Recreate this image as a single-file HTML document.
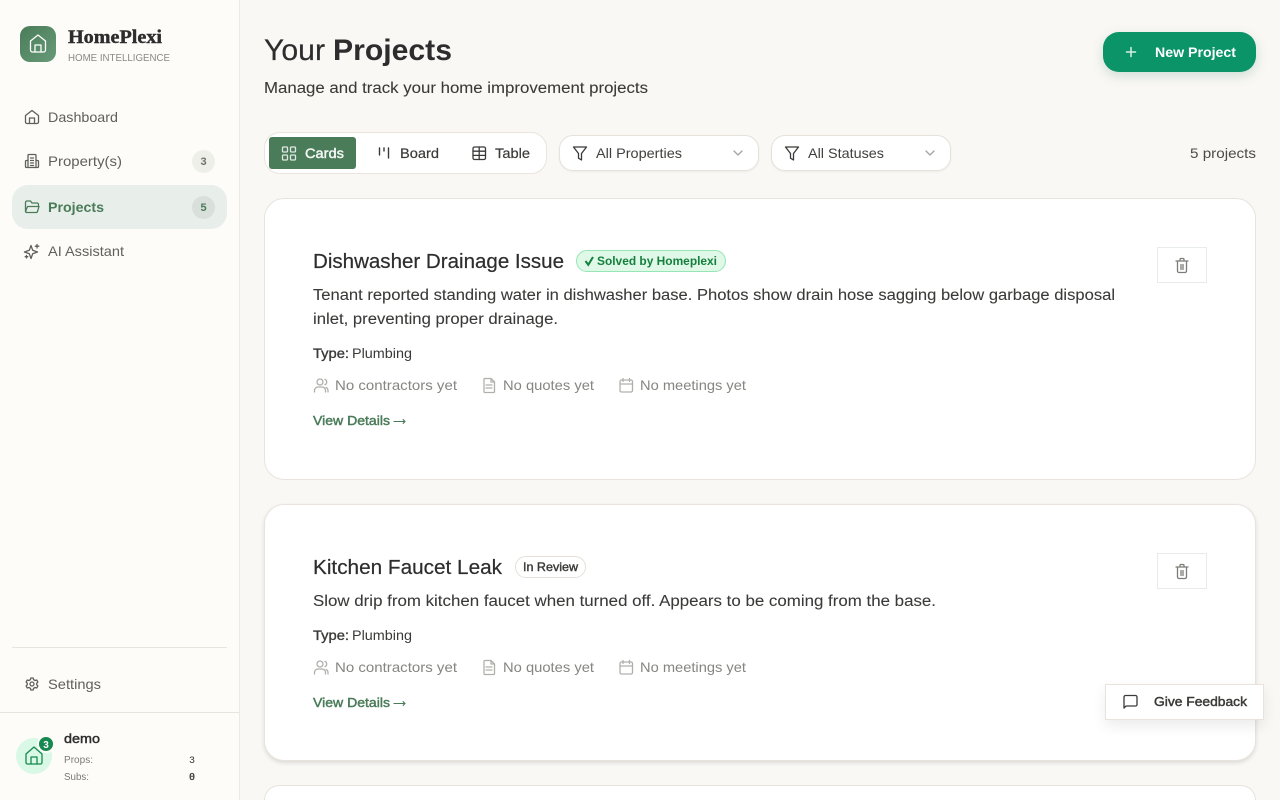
<!DOCTYPE html>
<html lang="en"><head><meta charset="utf-8"><title>HomePlexi - Projects</title>
<style>
html,body{margin:0;padding:0;width:1280px;height:800px;overflow:hidden;background:#faf8f5;font-family:"Liberation Sans",sans-serif}
#p{position:relative;width:1280px;height:800px;overflow:hidden;background:#faf8f5}
.b{position:absolute;box-sizing:border-box}
svg.o{position:absolute;left:0;top:0;display:block}
text{font-family:"Liberation Sans",sans-serif;fill:#2d2d2d}
.n{font-size:14px;fill:#5f5f5b}
.m{font-size:14px;fill:#858581}
.d{font-size:15.500px;fill:#3a3a38;stroke:#3a3a38;stroke-width:.08}
.t{font-size:20px;fill:#2d2d2d;stroke:#2d2d2d;stroke-width:.2}
.v{font-size:13px;fill:#4a7c59;stroke:#4a7c59;stroke-width:.45}
.w{font-size:14px;fill:#3a3a38;stroke:#3a3a38;stroke-width:.35}
.i{fill:none;stroke-width:1.300;stroke-linecap:round;stroke-linejoin:round}
</style></head><body><div id="p">
<div class="b" style="left:0;top:0;width:240px;height:800px;background:#fdfcf9;border-right:1px solid #ece8e2"></div>
<div class="b" style="left:20px;top:26px;width:36px;height:36px;border-radius:10px;background:linear-gradient(135deg,#4a7c59,#679a78)"></div>
<div class="b" style="left:12px;top:185px;width:215px;height:44px;border-radius:16px;background:#e8eeea"></div>
<div class="b" style="left:192px;top:149.500px;width:23px;height:23px;border-radius:50%;background:#efefea"></div>
<div class="b" style="left:192px;top:195.500px;width:23px;height:23px;border-radius:50%;background:#d9dfda"></div>
<div class="b" style="left:12px;top:647px;width:215px;height:1px;background:#e8e4de"></div>
<div class="b" style="left:0;top:712px;width:239px;height:1px;background:#e8e4de"></div>
<div class="b" style="left:16px;top:738px;width:36px;height:36px;border-radius:50%;background:#d9f8e6"></div>
<div class="b" style="left:37px;top:735px;width:18px;height:18px;border-radius:50%;background:#15894f;border:2px solid #fdfcf9"></div>

<div class="b" style="left:1103px;top:32px;width:153px;height:40px;border-radius:16px;background:#0a9468;box-shadow:0 4px 12px rgba(10,100,70,.18)"></div>
<div class="b" style="left:264px;top:132px;width:283px;height:42px;border-radius:16px;background:#fff;border:1px solid #eae4dc"></div>
<div class="b" style="left:269px;top:137px;width:87px;height:32px;border-radius:3px;background:#4a7c59"></div>
<div class="b" style="left:559px;top:135px;width:200px;height:36px;border-radius:14px;background:#fff;border:1px solid #e6e2da;box-shadow:0 1px 2px rgba(0,0,0,.05)"></div>
<div class="b" style="left:771px;top:135px;width:180px;height:36px;border-radius:14px;background:#fff;border:1px solid #e6e2da;box-shadow:0 1px 2px rgba(0,0,0,.05)"></div>

<div class="b" style="left:264px;top:198px;width:992px;height:282px;border-radius:20px;background:#fff;border:1px solid #e8e3dc"></div>
<div class="b" style="left:264px;top:504px;width:992px;height:257px;border-radius:20px;background:#fff;border:1px solid #e8e3dc;box-shadow:0 2px 4px rgba(0,0,0,.12)"></div>
<div class="b" style="left:264px;top:785px;width:992px;height:15px;border-radius:20px 20px 0 0;background:#fff;border:1px solid #e8e3dc;border-bottom:none"></div>
<div class="b" style="left:576px;top:250px;width:150px;height:22px;border-radius:11px;background:#dff8e8;border:1px solid #95e6b5"></div>
<div class="b" style="left:515px;top:556px;width:71px;height:22px;border-radius:11px;background:#fff;border:1px solid #e6e0d8"></div>
<div class="b" style="left:1157px;top:247px;width:50px;height:36px;background:#fff;border:1px solid #e8ece8"></div>
<div class="b" style="left:1157px;top:553px;width:50px;height:36px;background:#fff;border:1px solid #e8ece8"></div>
<div class="b" style="left:1105px;top:684px;width:159px;height:36px;background:#fff;border:1px solid #e8e3dc;box-shadow:0 6px 14px rgba(0,0,0,.08)"></div>

<svg class="o" width="1280" height="800" viewBox="0 0 1280 800" xmlns="http://www.w3.org/2000/svg">
<!-- logo -->
<g class="i" stroke="#fff" stroke-width="1.600"><path d="M30.500 41 38 35l7.500 6v9a2 2 0 0 1-2 2h-11a2 2 0 0 1-2-2z"/><path d="M35 52v-7h6v7"/></g>
<text x="68" y="43" textLength="94" lengthAdjust="spacingAndGlyphs" style="font-family:'Liberation Serif',serif;font-weight:bold;font-size:19px;stroke:#2d2d2d;stroke-width:.4">HomePlexi</text>
<text x="68" y="61" textLength="102" lengthAdjust="spacingAndGlyphs" style="font-size:10.500px;fill:#8a8a85">HOME INTELLIGENCE</text>

<!-- nav -->
<g class="i" stroke="#5f5f5b"><path d="M25.500 115.500 32 110.500l6.500 5v6.500a1.500 1.500 0 0 1-1.500 1.500H27a1.500 1.500 0 0 1-1.500-1.500z"/><path d="M29.500 123.500V118h5v5.500"/></g>
<text class="n" x="48" y="122" textLength="70" lengthAdjust="spacingAndGlyphs">Dashboard</text>
<g class="i" stroke="#5f5f5b"><path d="M28 167.500V155.500a1 1 0 0 1 1-1h6a1 1 0 0 1 1 1v12"/><path d="M28 160.500h-1.500a1 1 0 0 0-1 1v5a1 1 0 0 0 1 1h11a1 1 0 0 0 1-1v-5a1 1 0 0 0-1-1H36"/><path d="M30.500 158h3M30.500 160.500h3M30.500 163h3M30.500 165.500h3"/></g>
<text class="n" x="48" y="166" textLength="74" lengthAdjust="spacingAndGlyphs">Property(s)</text>
<text x="203.500" y="165" text-anchor="middle" style="font-size:11px;font-weight:bold;fill:#71716c">3</text>
<g class="i" stroke="#4a7c59"><path d="M25.500 211V202.500a1.500 1.500 0 0 1 1.500-1.500h3.500l1.500 2h5a1.500 1.500 0 0 1 1.500 1.500v1"/><path d="M25.500 211.500l2-5h11.500l-1.500 5a1.500 1.500 0 0 1-1.500 1H27a1.500 1.500 0 0 1-1.500-1z"/></g>
<text x="48" y="212" textLength="56" lengthAdjust="spacingAndGlyphs" style="font-size:14px;font-weight:bold;fill:#4a7c59">Projects</text>
<text x="203.500" y="211" text-anchor="middle" style="font-size:11px;font-weight:bold;fill:#4a7c59">5</text>
<g class="i" stroke="#5f5f5b"><path d="M31 245.500l1.700 4.800 4.800 1.700-4.800 1.700-1.700 4.800-1.700-4.800-4.800-1.700 4.800-1.700z"/><path d="M37 244.500v3.500M35.300 246.200h3.500M26.500 255.500v2.500M25.200 256.700h2.600"/></g>
<text class="n" x="48" y="256" textLength="76" lengthAdjust="spacingAndGlyphs">AI Assistant</text>
<g class="i" stroke="#5f5f5b"><circle cx="32" cy="684" r="2"/><path d="M30.800 678h2.400l.4 1.700 1.500.8 1.600-.5 1.200 2.100-1.200 1.200v1.400l1.200 1.200-1.200 2.100-1.600-.5-1.500.8-.4 1.700h-2.400l-.4-1.700-1.500-.8-1.600.5-1.200-2.100 1.200-1.200v-1.400l-1.200-1.200 1.200-2.100 1.600.5 1.500-.8z"/></g>
<text class="n" x="48" y="689" textLength="53" lengthAdjust="spacingAndGlyphs">Settings</text>

<!-- user -->
<g class="i" stroke="#15894f" stroke-width="1.500"><path d="M26 754l8-7 8 7v8.500a1.500 1.500 0 0 1-1.500 1.500h-13a1.500 1.500 0 0 1-1.500-1.500z"/><path d="M31 764v-7h6v7"/></g>
<text x="46" y="748" text-anchor="middle" style="font-size:10px;font-weight:bold;fill:#fff">3</text>
<text x="64" y="743" textLength="36" lengthAdjust="spacingAndGlyphs" style="font-size:13px;fill:#2d2d2d;stroke:#2d2d2d;stroke-width:.45">demo</text>
<text x="64" y="763" textLength="29" lengthAdjust="spacingAndGlyphs" style="font-size:10px;fill:#7b7b76">Props:</text>
<text x="64" y="780" textLength="25" lengthAdjust="spacingAndGlyphs" style="font-size:10px;fill:#7b7b76">Subs:</text>
<text x="189" y="763" style="font-family:'Liberation Mono',monospace;font-size:10px;fill:#3a3a38">3</text>
<text x="189" y="780" style="font-family:'DejaVu Sans Mono',monospace;font-size:10px;fill:#3a3a38;stroke:#3a3a38;stroke-width:.3">0</text>

<!-- header -->
<text x="264" y="60" textLength="61" lengthAdjust="spacingAndGlyphs" style="font-size:30px;fill:#2d2d2d;stroke:#2d2d2d;stroke-width:.2">Your</text>
<text x="333" y="60" textLength="119" lengthAdjust="spacingAndGlyphs" style="font-size:30px;font-weight:bold;fill:#2d2d2d">Projects</text>
<text x="264" y="93" textLength="384" lengthAdjust="spacingAndGlyphs" style="font-size:15.500px;fill:#3a3a38;stroke:#3a3a38;stroke-width:.08">Manage and track your home improvement projects</text>
<path d="M1126.500 52h9M1131 47.500v9" stroke="#d8f0e6" stroke-width="1.500" fill="none" stroke-linecap="round"/>
<text x="1155" y="57" textLength="81" lengthAdjust="spacingAndGlyphs" style="font-size:14px;font-weight:bold;fill:#fff">New Project</text>

<!-- toggles -->
<g class="i" stroke="#dfe8e2"><rect x="282.500" y="147" width="5" height="5" rx="1"/><rect x="290.500" y="147" width="5" height="5" rx="1"/><rect x="282.500" y="155" width="5" height="5" rx="1"/><rect x="290.500" y="155" width="5" height="5" rx="1"/></g>
<text x="305" y="158" textLength="39" lengthAdjust="spacingAndGlyphs" style="font-size:14px;fill:#f4f7f5;stroke:#f4f7f5;stroke-width:.45">Cards</text>
<path d="M379.500 148v7M384 148v3M388.500 148v10" stroke="#3a3a38" stroke-width="1.400" fill="none" stroke-linecap="round"/>
<text class="w" x="400" y="158" textLength="39" lengthAdjust="spacingAndGlyphs" style="stroke-width:.2">Board</text>
<g class="i" stroke="#3a3a38" stroke-width="1.500"><rect x="473" y="147" width="12.500" height="12.500" rx="1.500"/><path d="M473 151.200h12.500M473 155.400h12.500M479.200 147v12.500"/></g>
<text class="w" x="495" y="158" textLength="35" lengthAdjust="spacingAndGlyphs" style="stroke-width:.2">Table</text>

<!-- filters -->
<path class="i" stroke="#3a3a38" stroke-width="1.400" d="M573.500 147h13l-5 6.500v6.500l-3-1.800v-4.700z"/>
<text x="596" y="158" textLength="86" lengthAdjust="spacingAndGlyphs" style="font-size:14px;fill:#3f3f3c">All Properties</text>
<path class="i" stroke="#a5a5a0" d="M734 151l4 4 4-4"/>
<path class="i" stroke="#3a3a38" stroke-width="1.400" d="M785.500 147h13l-5 6.500v6.500l-3-1.800v-4.700z"/>
<text x="808" y="158" textLength="76" lengthAdjust="spacingAndGlyphs" style="font-size:14px;fill:#3f3f3c">All Statuses</text>
<path class="i" stroke="#a5a5a0" d="M926 151l4 4 4-4"/>
<text x="1190" y="158" textLength="66" lengthAdjust="spacingAndGlyphs" style="font-size:14px;fill:#4a4a47">5 projects</text>

<!-- card 1 -->
<text class="t" x="313" y="268" textLength="251" lengthAdjust="spacingAndGlyphs">Dishwasher Drainage Issue</text>
<path d="M585.500 261l2.800 3.800 4.700-7.800" fill="none" stroke="#15803d" stroke-width="2"/>
<text x="597" y="265" textLength="120" lengthAdjust="spacingAndGlyphs" style="font-size:12px;font-weight:bold;fill:#15803d">Solved by Homeplexi</text>
<text class="d" x="313" y="300" textLength="802" lengthAdjust="spacingAndGlyphs">Tenant reported standing water in dishwasher base. Photos show drain hose sagging below garbage disposal</text>
<text class="d" x="313" y="324" textLength="245" lengthAdjust="spacingAndGlyphs">inlet, preventing proper drainage.</text>
<text class="w" x="313" y="358" textLength="36" lengthAdjust="spacingAndGlyphs">Type:</text>
<text x="352" y="358" textLength="60" lengthAdjust="spacingAndGlyphs" style="font-size:14px;fill:#3a3a38">Plumbing</text>
<g class="i" stroke="#b0b0ab" stroke-width="1.200"><circle cx="320" cy="382" r="3"/><path d="M314.500 392v-1.500a3.500 3.500 0 0 1 3.500-3.500h4a3.500 3.500 0 0 1 3.500 3.500V392M325 379.300a3 3 0 0 1 0 5.400M328 392v-1.500a3.500 3.500 0 0 0-2-3"/></g>
<text class="m" x="335" y="390" textLength="122" lengthAdjust="spacingAndGlyphs">No contractors yet</text>
<g class="i" stroke="#b0b0ab" stroke-width="1.200"><path d="M485 378.500h6l3.500 3.500v9.500a.9.900 0 0 1-1 1h-8.500a.9.900 0 0 1-1-1V379.500a.9.900 0 0 1 1-1z"/><path d="M491 378.500V382h3.500M486 385h6M486 388h6"/></g>
<text class="m" x="503" y="390" textLength="91" lengthAdjust="spacingAndGlyphs">No quotes yet</text>
<g class="i" stroke="#b0b0ab" stroke-width="1.200"><rect x="620" y="380" width="12.500" height="12" rx="1.500"/><path d="M620 384h12.500M623 378.500v3M629.500 378.500v3"/></g>
<text class="m" x="640" y="390" textLength="106" lengthAdjust="spacingAndGlyphs">No meetings yet</text>
<text class="v" x="313" y="425" textLength="77" lengthAdjust="spacingAndGlyphs">View Details</text>
<path d="M393.500 421.500h11.500M402.800 419.300l2.200 2.200-2.200 2.200" fill="none" stroke="#4a7c59" stroke-width="1.100"/>
<g class="i" stroke="#7c7c78" stroke-width="1.200"><path d="M1176 261h12M1177.500 261v10a1.500 1.500 0 0 0 1.500 1.500h6a1.500 1.500 0 0 0 1.500-1.500v-10M1180 261v-1.500a1 1 0 0 1 1-1h2a1 1 0 0 1 1 1V261M1181 264.500v5M1183 264.500v5"/></g>

<!-- card 2 -->
<text class="t" x="313" y="574" textLength="189" lengthAdjust="spacingAndGlyphs">Kitchen Faucet Leak</text>
<text x="523" y="571" textLength="55" lengthAdjust="spacingAndGlyphs" style="font-size:12px;fill:#3a3a38;stroke:#3a3a38;stroke-width:.4">In Review</text>
<text class="d" x="313" y="606" textLength="623" lengthAdjust="spacingAndGlyphs">Slow drip from kitchen faucet when turned off. Appears to be coming from the base.</text>
<text class="w" x="313" y="640" textLength="36" lengthAdjust="spacingAndGlyphs">Type:</text>
<text x="352" y="640" textLength="60" lengthAdjust="spacingAndGlyphs" style="font-size:14px;fill:#3a3a38">Plumbing</text>
<g transform="translate(0 282)">
<g class="i" stroke="#b0b0ab" stroke-width="1.200"><circle cx="320" cy="382" r="3"/><path d="M314.500 392v-1.500a3.500 3.500 0 0 1 3.500-3.500h4a3.500 3.500 0 0 1 3.500 3.500V392M325 379.300a3 3 0 0 1 0 5.400M328 392v-1.500a3.500 3.500 0 0 0-2-3"/></g>
<text class="m" x="335" y="390" textLength="122" lengthAdjust="spacingAndGlyphs">No contractors yet</text>
<g class="i" stroke="#b0b0ab" stroke-width="1.200"><path d="M485 378.500h6l3.500 3.500v9.500a.9.900 0 0 1-1 1h-8.500a.9.900 0 0 1-1-1V379.500a.9.900 0 0 1 1-1z"/><path d="M491 378.500V382h3.500M486 385h6M486 388h6"/></g>
<text class="m" x="503" y="390" textLength="91" lengthAdjust="spacingAndGlyphs">No quotes yet</text>
<g class="i" stroke="#b0b0ab" stroke-width="1.200"><rect x="620" y="380" width="12.500" height="12" rx="1.500"/><path d="M620 384h12.500M623 378.500v3M629.500 378.500v3"/></g>
<text class="m" x="640" y="390" textLength="106" lengthAdjust="spacingAndGlyphs">No meetings yet</text>
<text class="v" x="313" y="425" textLength="77" lengthAdjust="spacingAndGlyphs">View Details</text>
<path d="M393.500 421.500h11.500M402.800 419.300l2.200 2.200-2.200 2.200" fill="none" stroke="#4a7c59" stroke-width="1.100"/>
</g>
<g transform="translate(0 306)" class="i" stroke="#7c7c78" stroke-width="1.200"><path d="M1176 261h12M1177.500 261v10a1.500 1.500 0 0 0 1.500 1.500h6a1.500 1.500 0 0 0 1.500-1.500v-10M1180 261v-1.500a1 1 0 0 1 1-1h2a1 1 0 0 1 1 1V261M1181 264.500v5M1183 264.500v5"/></g>

<!-- feedback -->
<path class="i" stroke="#3a3a38" stroke-width="1.500" d="M1124 708v-11a1.500 1.500 0 0 1 1.500-1.500h10a1.500 1.500 0 0 1 1.500 1.500v7.500a1.500 1.500 0 0 1-1.500 1.500h-9.500z"/>
<text x="1154" y="706" textLength="93" lengthAdjust="spacingAndGlyphs" style="font-size:13px;fill:#3a3a38;stroke:#3a3a38;stroke-width:.45">Give Feedback</text>
</svg>
</div></body></html>
